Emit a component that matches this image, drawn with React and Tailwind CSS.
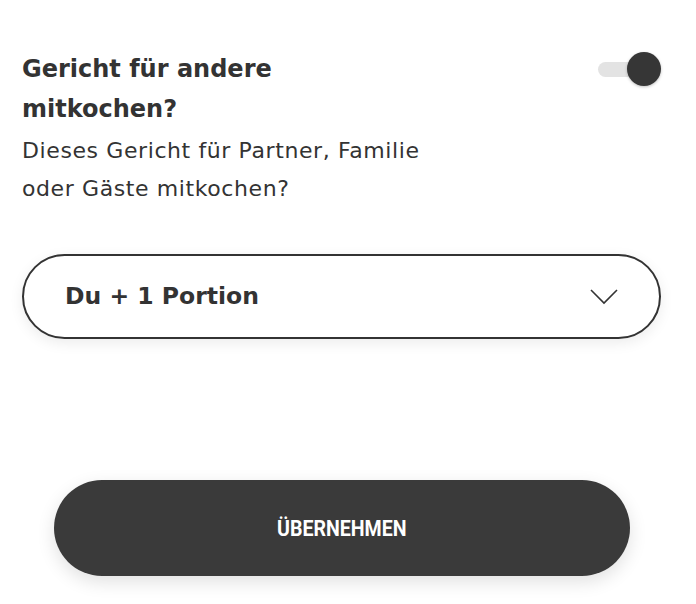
import React, { useState } from "react";

const App = () => {
  const [on, setOn] = useState(true);

  return (
    <div className="w-[696px] h-[604px] bg-white text-[#333333] font-['DejaVu_Sans',sans-serif] relative">
      <div className="pt-[49px] px-[22px]">
        <div className="flex justify-between">
          <div>
            <h2 className="text-[24px] leading-[40px] font-bold">
              Gericht für andere
              <br />
              mitkochen?
            </h2>
            <p className="text-[22px] leading-[38px] mt-[3px] tracking-[0.6px]">
              Dieses Gericht für Partner, Familie
              <br />
              oder Gäste mitkochen?
            </p>
          </div>
          <button
            onClick={() => setOn(!on)}
            className="relative w-[68px] h-[34px] mt-[3px] mr-[13px] flex items-center"
          >
            <span className="block w-[46px] h-[15px] ml-[5px] rounded-full bg-[#e3e3e3]" />
            <span className="absolute right-0 top-0 w-[34px] h-[34px] rounded-full bg-[#363636] shadow-[0_1px_3px_rgba(0,0,0,0.25)]" />
          </button>
        </div>

        <div className="mt-[46px] h-[85px] w-[639px] rounded-full border-2 border-[#333333] shadow-[0_4px_14px_rgba(0,0,0,0.08)] flex items-center justify-between pl-[41px] pr-[40px]">
          <span className="text-[23.5px] font-bold">Du + 1 Portion</span>
          <svg width="30" height="18" viewBox="0 0 30 18" fill="none">
            <path d="M2 2 L15 15 L28 2" stroke="#333333" strokeWidth="1.6" />
          </svg>
        </div>
      </div>

      <div className="flex justify-center mt-[141px] pr-[13px]">
        <button className="w-[576px] h-[96px] rounded-full bg-[#3a3a3a] text-white shadow-[0_6px_18px_rgba(0,0,0,0.12)] flex items-center justify-center">
          <span className="font-['Roboto',sans-serif] font-bold text-[22px] inline-block scale-x-[0.89]">
            ÜBERNEHMEN
          </span>
        </button>
      </div>
    </div>
  );
};

export default App;
